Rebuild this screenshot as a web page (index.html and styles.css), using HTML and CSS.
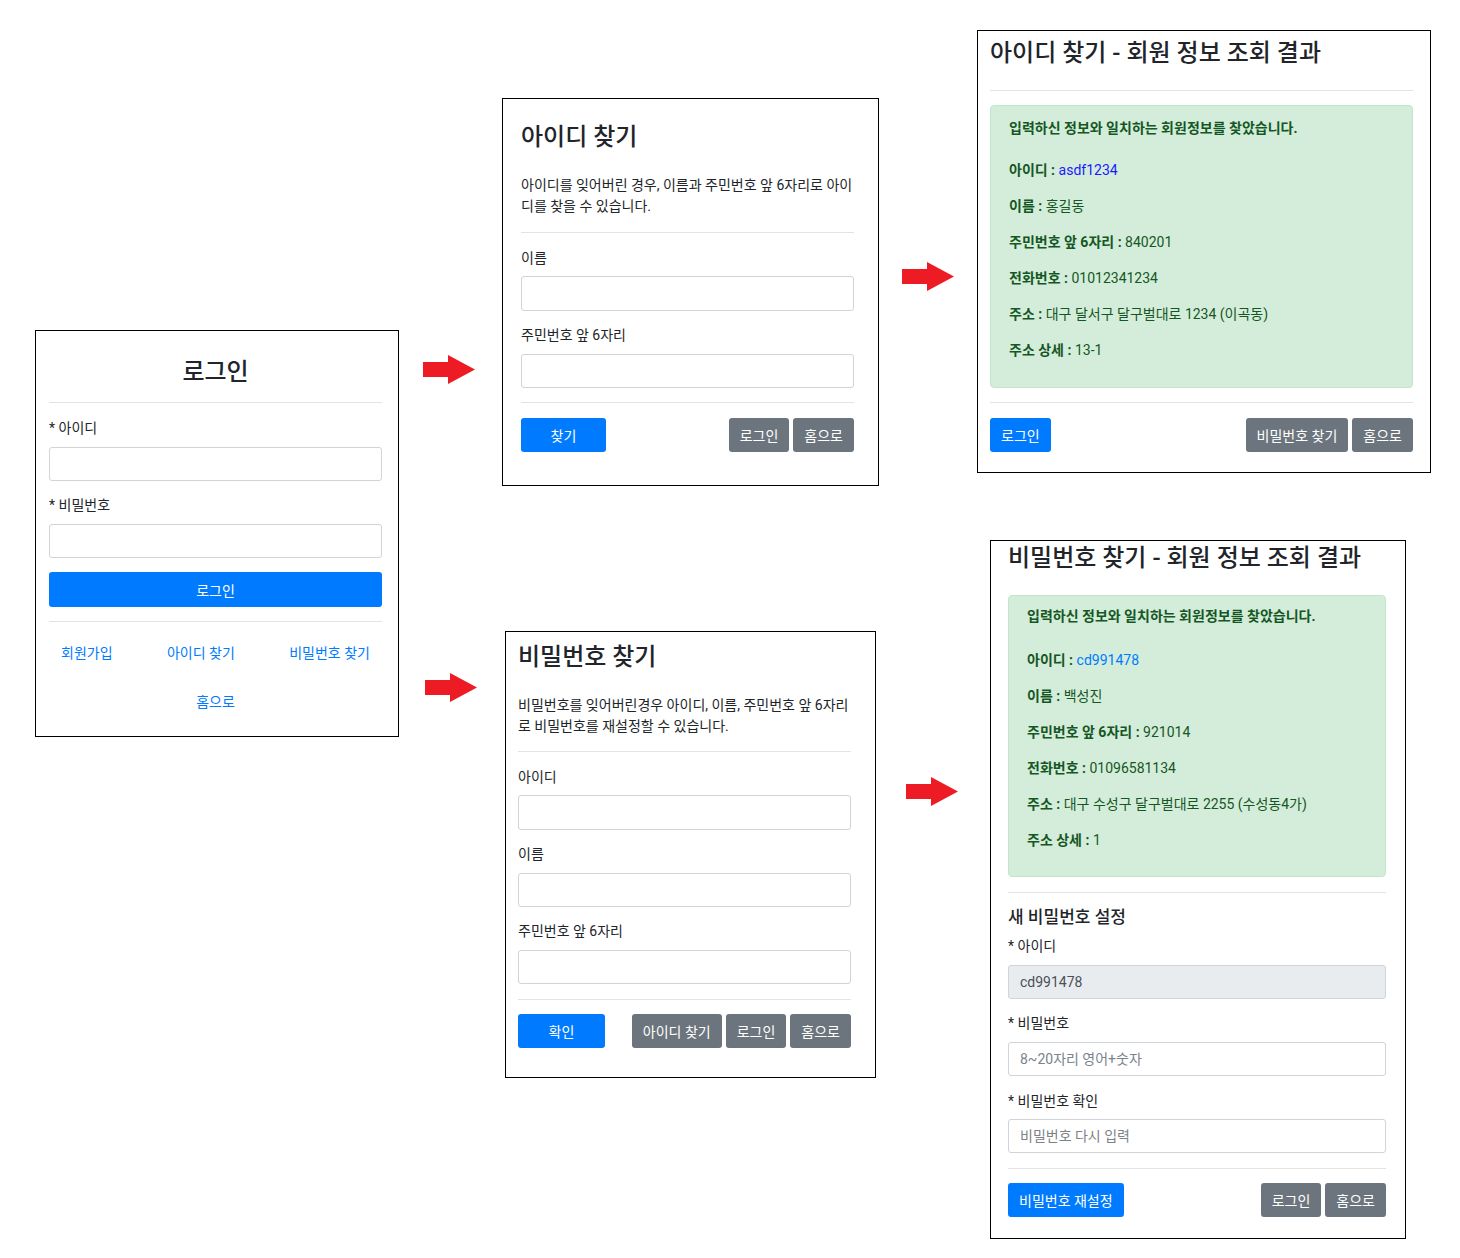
FILE: index.html
```html
<!DOCTYPE html>
<html lang="ko">
<head>
<meta charset="utf-8">
<title>회원 로그인 흐름</title>
<link rel="stylesheet" href="styles.css">
</head>
<body>
<div class="canvas">

  <!-- 로그인 -->
  <section class="panel p-login">
    <h3 class="title title-center">로그인</h3>
    <div class="divider mt16"></div>
    <div class="label mt15">* 아이디</div>
    <input class="input mt9" type="text">
    <div class="label mt14">* 비밀번호</div>
    <input class="input mt9" type="password">
    <div class="btn btn-primary btn-block mt14">로그인</div>
    <div class="divider mt14"></div>
    <div class="links mt21">
      <span class="link">회원가입</span>
      <span class="link">아이디 찾기</span>
      <span class="link">비밀번호 찾기</span>
    </div>
    <div class="home-link mt29"><span class="link">홈으로</span></div>
  </section>

  <!-- 아이디 찾기 -->
  <section class="panel p-findid">
    <h3 class="title">아이디 찾기</h3>
    <p class="desc mt24">아이디를 잊어버린 경우, 이름과 주민번호 앞 6자리로 아이디를 찾을 수 있습니다.</p>
    <div class="divider mt15"></div>
    <div class="label mt15">이름</div>
    <input class="input input-35 mt8" type="text">
    <div class="label mt14">주민번호 앞 6자리</div>
    <input class="input mt9" type="text">
    <div class="divider mt14"></div>
    <div class="btn-row mt15">
      <div class="btn btn-primary w85">찾기</div>
      <div class="btn-group">
        <div class="btn btn-secondary">로그인</div>
        <div class="btn btn-secondary">홈으로</div>
      </div>
    </div>
  </section>

  <!-- 아이디 찾기 결과 -->
  <section class="panel p-idresult">
    <h3 class="title">아이디 찾기 - 회원 정보 조회 결과</h3>
    <div class="divider mt23"></div>
    <div class="alert alert-a mt14">
      <div class="alert-head">입력하신 정보와 일치하는 회원정보를 찾았습니다.</div>
      <div class="row first"><b>아이디 :</b> <span class="id-blue">asdf1234</span></div>
      <div class="row"><b>이름 :</b> 홍길동</div>
      <div class="row"><b>주민번호 앞 6자리 :</b> 840201</div>
      <div class="row"><b>전화번호 :</b> 01012341234</div>
      <div class="row"><b>주소 :</b> 대구 달서구 달구벌대로 1234 (이곡동)</div>
      <div class="row"><b>주소 상세 :</b> 13-1</div>
    </div>
    <div class="divider mt14"></div>
    <div class="btn-row mt15">
      <div class="btn btn-primary">로그인</div>
      <div class="btn-group">
        <div class="btn btn-secondary">비밀번호 찾기</div>
        <div class="btn btn-secondary">홈으로</div>
      </div>
    </div>
  </section>

  <!-- 비밀번호 찾기 -->
  <section class="panel p-findpw">
    <h3 class="title">비밀번호 찾기</h3>
    <p class="desc mt24">비밀번호를 잊어버린경우 아이디, 이름, 주민번호 앞 6자리로 비밀번호를 재설정할 수 있습니다.</p>
    <div class="divider mt14"></div>
    <div class="label mt15">아이디</div>
    <input class="input input-35 mt8" type="text">
    <div class="label mt14">이름</div>
    <input class="input mt9" type="text">
    <div class="label mt14">주민번호 앞 6자리</div>
    <input class="input mt9" type="text">
    <div class="divider mt15"></div>
    <div class="btn-row mt14">
      <div class="btn btn-primary w87">확인</div>
      <div class="btn-group">
        <div class="btn btn-secondary">아이디 찾기</div>
        <div class="btn btn-secondary">로그인</div>
        <div class="btn btn-secondary">홈으로</div>
      </div>
    </div>
  </section>

  <!-- 비밀번호 찾기 결과 -->
  <section class="panel p-pwresult">
    <h3 class="title">비밀번호 찾기 - 회원 정보 조회 결과</h3>
    <div class="alert alert-b mt23">
      <div class="alert-head">입력하신 정보와 일치하는 회원정보를 찾았습니다.</div>
      <div class="row first-b"><b>아이디 :</b> <span class="id-link">cd991478</span></div>
      <div class="row"><b>이름 :</b> 백성진</div>
      <div class="row"><b>주민번호 앞 6자리 :</b> 921014</div>
      <div class="row"><b>전화번호 :</b> 01096581134</div>
      <div class="row"><b>주소 :</b> 대구 수성구 달구벌대로 2255 (수성동4가)</div>
      <div class="row"><b>주소 상세 :</b> 1</div>
    </div>
    <div class="divider mt15"></div>
    <h5 class="subtitle mt12">새 비밀번호 설정</h5>
    <div class="label mt7">* 아이디</div>
    <input class="input input-disabled mt9" type="text" value="cd991478" disabled>
    <div class="label mt14">* 비밀번호</div>
    <input class="input mt9" type="password" placeholder="8~20자리 영어+숫자">
    <div class="label mt15">* 비밀번호 확인</div>
    <input class="input mt8" type="password" placeholder="비밀번호 다시 입력">
    <div class="divider mt15"></div>
    <div class="btn-row mt14">
      <div class="btn btn-primary">비밀번호 재설정</div>
      <div class="btn-group">
        <div class="btn btn-secondary">로그인</div>
        <div class="btn btn-secondary">홈으로</div>
      </div>
    </div>
  </section>

  <!-- arrows -->
  <svg class="arrow a1" width="52" height="30" viewBox="0 0 52 30"><polygon points="0,7 25,7 25,0 52,14.5 25,29 25,22 0,22"/></svg>
  <svg class="arrow a2" width="52" height="30" viewBox="0 0 52 30"><polygon points="0,7 25,7 25,0 52,14.5 25,29 25,22 0,22"/></svg>
  <svg class="arrow a3" width="52" height="30" viewBox="0 0 52 30"><polygon points="0,7 25,7 25,0 52,14.5 25,29 25,22 0,22"/></svg>
  <svg class="arrow a4" width="52" height="30" viewBox="0 0 52 30"><polygon points="0,7 25,7 25,0 52,14.5 25,29 25,22 0,22"/></svg>
</div>
</body>
</html>
```
FILE: styles.css
```css
* { box-sizing: border-box; }
html, body { margin: 0; padding: 0; background: #fff; }
body {
  font-family: Roboto, "Noto Sans CJK KR", sans-serif;
  font-size: 14px;
  color: #212529;
}
.canvas { position: relative; width: 1460px; height: 1258px; }

.panel {
  position: absolute;
  background: #fff;
  border: 1px solid #000;
  display: flex;
  flex-direction: column;
}
.p-login   { left: 35px;  top: 330px; width: 364px; height: 407px; padding: 27px 16px 0 13px; }
.p-findid  { left: 502px; top: 98px;  width: 377px; height: 388px; padding: 24px 24px 0 18px; }
.p-idresult{ left: 977px; top: 30px;  width: 454px; height: 443px; padding: 8px 17px 0 12px; }
.p-findpw  { left: 505px; top: 631px; width: 371px; height: 447px; padding: 11px 24px 0 12px; }
.p-pwresult{ left: 990px; top: 540px; width: 416px; height: 699px; padding: 3px 19px 0 17px; }

.title {
  margin: 0;
  font-size: 24px;
  font-weight: 500;
  line-height: 28px;
  height: 28px;
  white-space: nowrap;
  color: #212529;
}
.title-center { text-align: center; }
.subtitle {
  margin-bottom: 0;
  font-size: 17px;
  font-weight: 500;
  line-height: 24px;
  height: 24px;
}
.desc {
  margin-bottom: 0;
  line-height: 21px;
  height: 42px;
}
.divider { height: 1px; background: #e3e3e3; flex: none; }
.label { line-height: 20px; height: 20px; }

.input {
  display: block;
  width: 100%;
  height: 34px;
  border: 1px solid #ced4da;
  border-radius: 3px;
  background: #fff;
  padding: 0 11px;
  font-family: inherit;
  font-size: 14px;
  color: #495057;
  outline: none;
  flex: none;
}
.input-35 { height: 35px; }
.input::placeholder { color: #7b8289; }
.input-disabled { background: #e9ecef; color: #495057; }

.btn {
  display: inline-flex;
  align-items: center;
  justify-content: center;
  height: 34px;
  padding: 0 11px;
  border-radius: 3px;
  color: #fff;
  font-size: 14px;
  white-space: nowrap;
}
.btn-primary { background: #007bff; }
.btn-secondary { background: #6c757d; }
.btn-block { display: flex; width: 100%; height: 35px; }
.w85 { width: 85px; }
.w87 { width: 87px; }
.btn-row { display: flex; justify-content: space-between; }
.btn-group { display: flex; gap: 4px; }

.links {
  display: flex;
  justify-content: space-between;
  padding: 0 12px;
  line-height: 20px;
  height: 20px;
}
.link { color: #007bff; }
.home-link { text-align: center; line-height: 20px; height: 20px; }

.alert {
  background: #d4edda;
  border: 1px solid #c3e6cb;
  border-radius: 4px;
  color: #155724;
  padding-left: 18px;
  flex: none;
}
.alert-a { height: 283px; padding-top: 12px; }
.alert-b { height: 282px; padding-top: 10px; }
.alert-head { font-weight: 700; line-height: 20px; height: 20px; }
.row { line-height: 20px; height: 20px; margin-top: 16px; white-space: nowrap; }
.row b { font-weight: 700; }
.row.first { margin-top: 22px; }
.row.first-b { margin-top: 24px; }
.id-blue { color: #1a1aff; }
.id-link { color: #007bff; }

.mt7 { margin-top: 7px; }
.mt8 { margin-top: 8px; }
.mt9 { margin-top: 9px; }
.mt12 { margin-top: 12px; }
.mt14 { margin-top: 14px; }
.mt15 { margin-top: 15px; }
.mt16 { margin-top: 16px; }
.mt21 { margin-top: 21px; }
.mt22 { margin-top: 22px; }
.mt23 { margin-top: 23px; }
.mt24 { margin-top: 24px; }
.mt29 { margin-top: 29px; }

.arrow { position: absolute; fill: #ed1c24; }
.a1 { left: 423px; top: 355px; }
.a2 { left: 902px; top: 262px; }
.a3 { left: 425px; top: 673px; }
.a4 { left: 906px; top: 777px; }
```
